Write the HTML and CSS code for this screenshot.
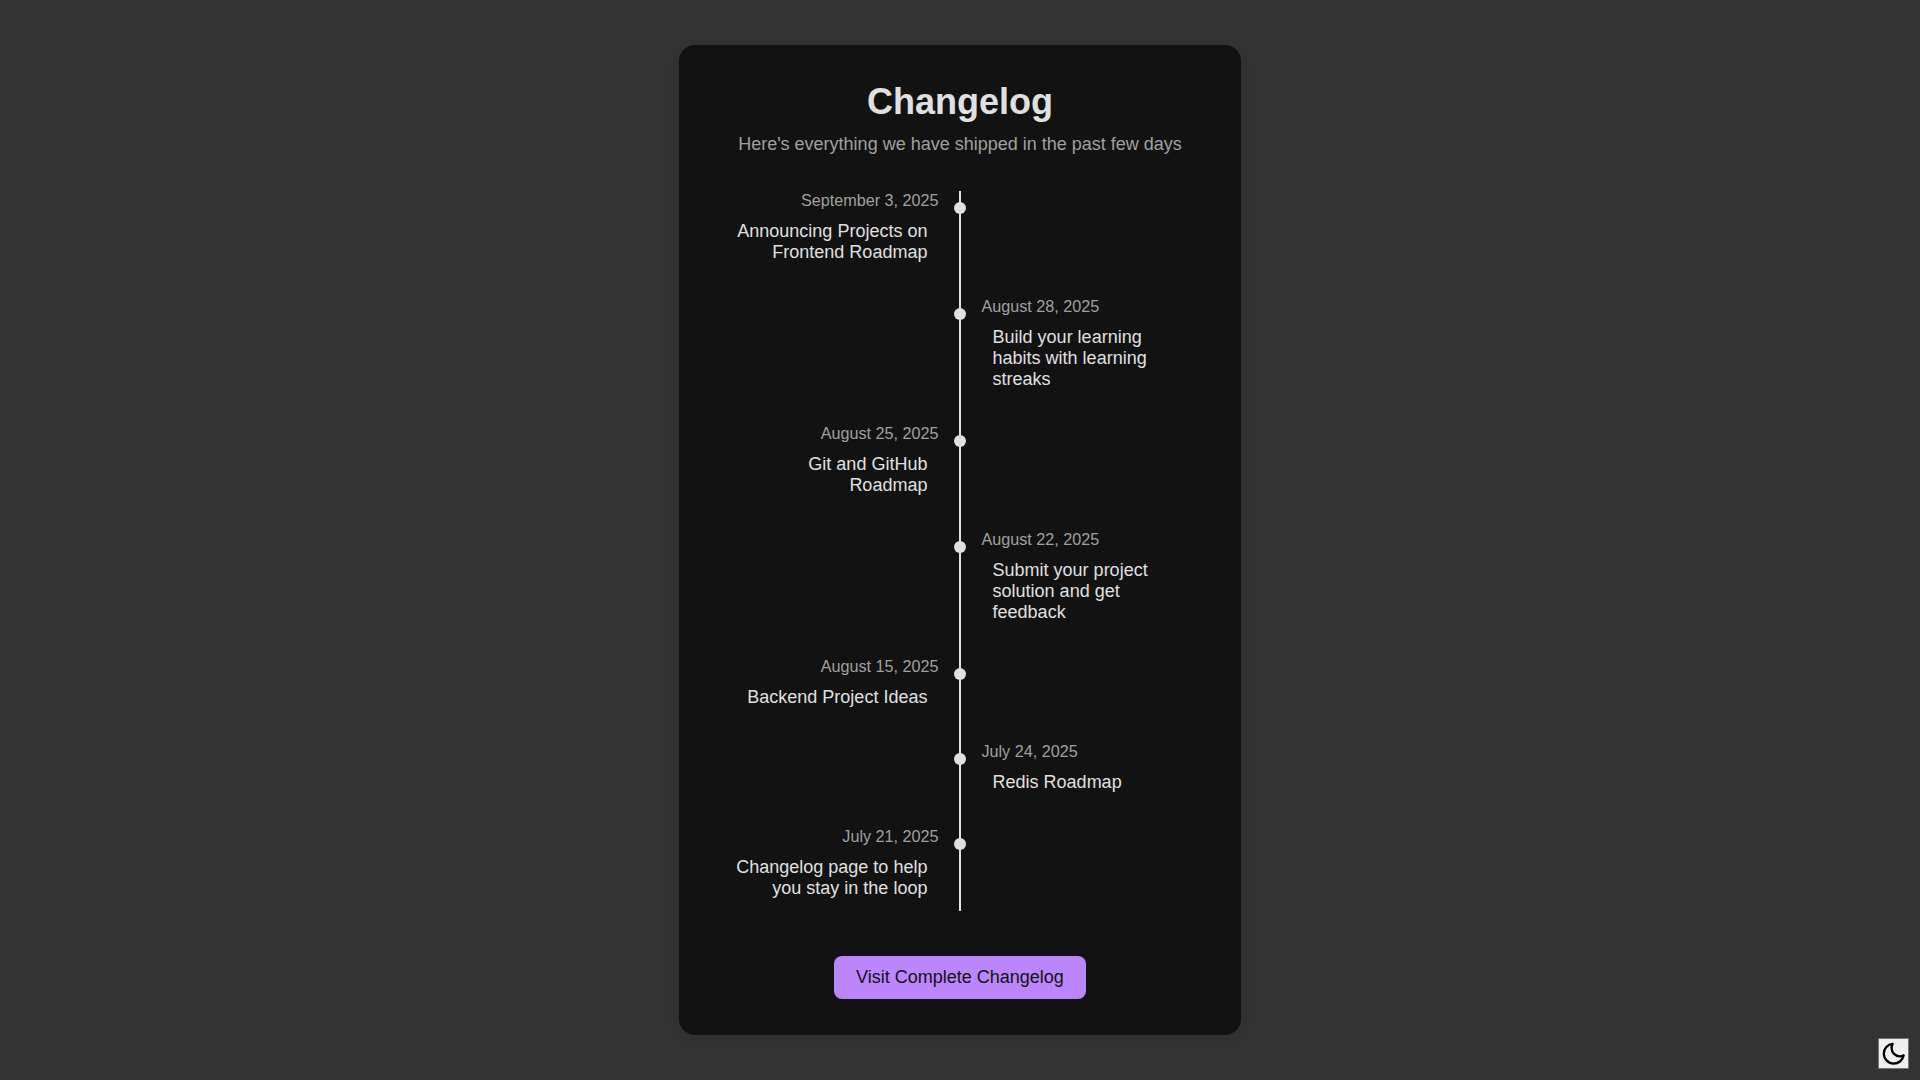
FILE: index.html
```html
<!DOCTYPE html>
<html lang="en">
<head>
<meta charset="utf-8">
<title>Changelog</title>
<link rel="stylesheet" href="styles.css">
</head>
<body>
<main class="card">
  <h1 class="heading">Changelog</h1>
  <p class="subtitle">Here's everything we have shipped in the past few days</p>
  <ol class="timeline">
    <li class="entry left"><div class="content"><time class="date">September 3, 2025</time><p class="title">Announcing Projects on Frontend Roadmap</p></div></li>
    <li class="entry right"><div class="content"><time class="date">August 28, 2025</time><p class="title">Build your learning habits with learning streaks</p></div></li>
    <li class="entry left"><div class="content"><time class="date">August 25, 2025</time><p class="title">Git and GitHub Roadmap</p></div></li>
    <li class="entry right"><div class="content"><time class="date">August 22, 2025</time><p class="title">Submit your project solution and get feedback</p></div></li>
    <li class="entry left"><div class="content"><time class="date">August 15, 2025</time><p class="title">Backend Project Ideas</p></div></li>
    <li class="entry right"><div class="content"><time class="date">July 24, 2025</time><p class="title">Redis Roadmap</p></div></li>
    <li class="entry left"><div class="content"><time class="date">July 21, 2025</time><p class="title">Changelog page to help you stay in the loop</p></div></li>
  </ol>
  <a class="visit" href="#">Visit Complete Changelog</a>
</main>
<button class="theme-toggle" aria-label="Toggle theme">
  <svg viewBox="0 0 24 24" width="24" height="24" fill="none" stroke="#000" stroke-width="2.3" stroke-linecap="round" stroke-linejoin="round"><path d="M10.6 1.900C5.700 2.200 1.800 6.500 1.800 11.600A10 10 0 0 0 11.800 21.600c4.900 0 9-3.500 9.900-8.300-1.200.7-2.500 1-3.900 1a8.200 8.200 0 0 1-8.200-8.200c0-1.500.4-2.900 1-4.200z"/></svg>
</button>
</body>
</html>
```
FILE: styles.css
```css
* { box-sizing: border-box; margin: 0; padding: 0; }

body {
  min-height: 100vh;
  display: flex;
  justify-content: center;
  align-items: center;
  background: #333;
  color: #e0e0e0;
  font-family: Arial, "Liberation Sans", sans-serif;
}

.card {
  width: 562px;
  height: 990px;
  padding: 36px;
  display: flex;
  flex-direction: column;
  align-items: center;
  background: #121212;
  border-radius: 16px;
  box-shadow: 0 4px 16px rgba(0, 0, 0, 0.1);
}

.heading { font-size: 36px; line-height: 41px; }

.subtitle {
  margin-top: 12px;
  font-size: 18px;
  line-height: 21px;
  color: #a0a0a0;
}

.timeline {
  width: 100%;
  height: 720px;
  margin-top: 36px;
  display: flex;
  flex-direction: column;
  gap: 22px;
  list-style: none;
  background: linear-gradient(#e0e0e0, #e0e0e0) center / 2px 100% no-repeat;
}

.entry {
  position: relative;
  display: grid;
  grid-template-columns: 1fr 1fr;
}

.entry::before {
  content: "";
  position: absolute;
  top: 11px;
  left: calc(50% - 6px);
  width: 12px;
  height: 12px;
  border-radius: 50%;
  background: #e0e0e0;
}

.content { display: flex; flex-direction: column; padding-bottom: 12px; }
.left .content { grid-column: 1; align-items: flex-end; padding-right: 21.4px; text-align: right; }
.right .content { grid-column: 2; align-items: flex-start; padding-left: 21.4px; }

.date { font-size: 16.2px; line-height: 18px; color: #a0a0a0; }

.title {
  max-width: 206px;
  margin-top: 12px;
  padding: 0 11.2px;
  font-size: 18px;
  line-height: 21px;
}
.left .title { padding-left: 0; }
.right .title { padding-right: 0; }

.visit {
  margin-top: 45px;
  padding: 11px 22px;
  border-radius: 8px;
  background: #bb86fc;
  color: #121212;
  font-size: 18px;
  line-height: 21px;
  text-decoration: none;
}

.theme-toggle {
  position: fixed;
  right: 11px;
  bottom: 11px;
  width: 31px;
  height: 31px;
  display: flex;
  align-items: center;
  justify-content: center;
  border: 1px solid #767676;
  border-radius: 1px;
  background: #efefef;
}
```
